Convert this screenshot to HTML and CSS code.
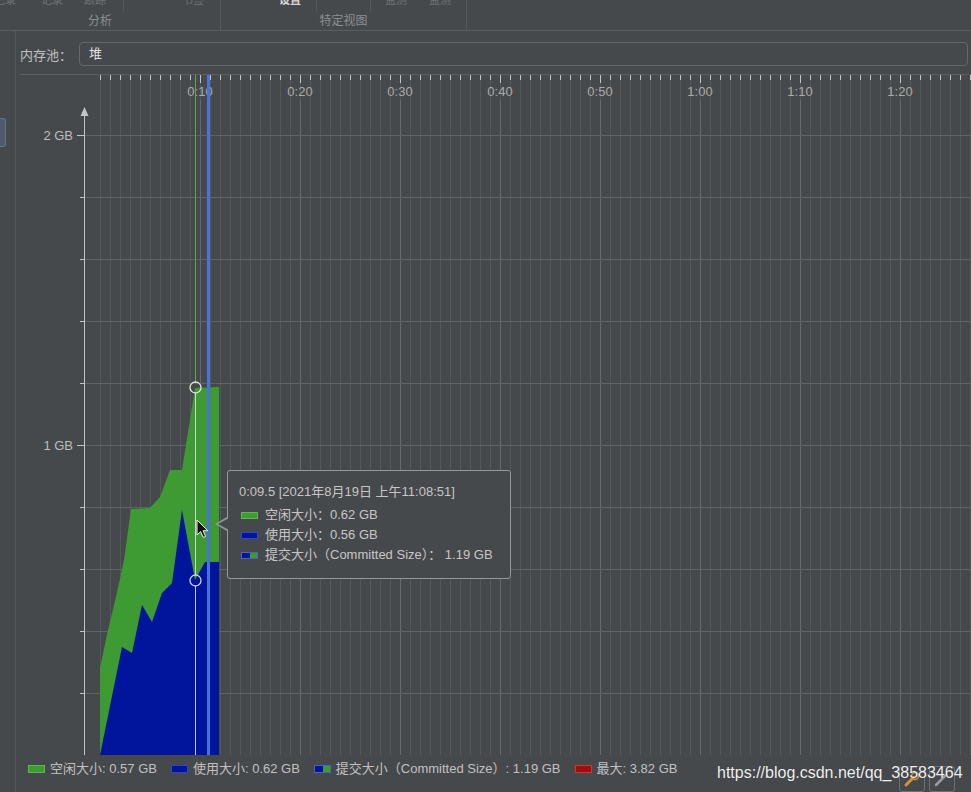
FILE: index.html
```html
<!DOCTYPE html>
<html lang="zh-CN">
<head>
<meta charset="utf-8">
<title>内存</title>
<link rel="stylesheet" href="styles.css">
</head>
<body>
<div class="app">
  <div class="toolbar">
    <div class="tgroup g1">
      <div class="trow">
        <span class="ti w50">记录</span>
        <span class="ti w44">记录</span>
        <span class="ti w42">跟踪</span>
        <span class="sp w7"></span>
        <span class="tsep"></span>
        <span class="sp w42"></span>
        <span class="ti w54">书签</span>
      </div>
      <div class="tlabel">分析</div>
    </div>
    <div class="tgroup g2">
      <div class="trow">
        <span class="sp w43"></span>
        <span class="ti w52 on">设置</span>
        <span class="tsep"></span>
        <span class="sp w53"></span>
        <span class="tsep"></span>
        <span class="sp w3"></span>
        <span class="ti w44">监测</span>
        <span class="ti w44">监测</span>
        <span class="sp w4"></span>
      </div>
      <div class="tlabel">特定视图</div>
    </div>
  </div>

  <div class="main">
    <div class="sidebar"><div class="side-btn"></div></div>
    <div class="content">
      <div class="pool-row">
        <span class="pool-label">内存池：</span>
        <div class="pool-input">堆</div>
      </div>

      <div class="chart-wrap">
        <svg class="chart" viewBox="20 75 951 680" width="951" height="680" xmlns="http://www.w3.org/2000/svg">
          <defs>
            <pattern id="vminor" x="100" y="0" width="10" height="10" patternUnits="userSpaceOnUse"><rect width="1" height="10" fill="#55585b"/></pattern>
            <pattern id="vmajor" x="100" y="0" width="100" height="10" patternUnits="userSpaceOnUse"><rect width="1" height="10" fill="#67696c"/></pattern>
            <pattern id="tminor" x="100" y="0" width="10" height="10" patternUnits="userSpaceOnUse"><rect width="1" height="10" fill="#c4c4c4"/></pattern>
            <pattern id="tmajor" x="100" y="0" width="100" height="10" patternUnits="userSpaceOnUse"><rect width="1" height="10" fill="#c4c4c4"/></pattern>
            <pattern id="hgrid" x="0" y="135" width="10" height="62" patternUnits="userSpaceOnUse"><rect width="10" height="1" fill="#606366"/></pattern>
            <pattern id="yticks" x="0" y="135" width="10" height="62" patternUnits="userSpaceOnUse"><rect width="10" height="1" fill="#c4c4c4"/></pattern>
          </defs>

          <rect x="100" y="80" width="871" height="675" fill="url(#vminor)"/>
          <rect x="200" y="100" width="771" height="655" fill="url(#vmajor)"/>
          <rect x="85" y="135" width="886" height="620" fill="url(#hgrid)"/>
          <rect x="100" y="75" width="871" height="5" fill="url(#tminor)"/>
          <rect x="200" y="75" width="771" height="8" fill="url(#tmajor)"/>

          <text class="axis-t" x="200" y="96" text-anchor="middle">0:10</text>
          <text class="axis-t" x="300" y="96" text-anchor="middle">0:20</text>
          <text class="axis-t" x="400" y="96" text-anchor="middle">0:30</text>
          <text class="axis-t" x="500" y="96" text-anchor="middle">0:40</text>
          <text class="axis-t" x="600" y="96" text-anchor="middle">0:50</text>
          <text class="axis-t" x="700" y="96" text-anchor="middle">1:00</text>
          <text class="axis-t" x="800" y="96" text-anchor="middle">1:10</text>
          <text class="axis-t" x="900" y="96" text-anchor="middle">1:20</text>

          <rect x="84" y="114" width="1" height="641" fill="#c4c4c4"/>
          <polygon points="84.5,107 80.5,116 88.5,116" fill="#c4c4c4"/>
          <rect x="80" y="135" width="4" height="620" fill="url(#yticks)"/>
          <rect x="77" y="135" width="7" height="1" fill="#c4c4c4"/>
          <rect x="77" y="445" width="7" height="1" fill="#c4c4c4"/>
          <text class="y-t" x="73" y="140" text-anchor="end">2 GB</text>
          <text class="y-t" x="73" y="450" text-anchor="end">1 GB</text>

          <polygon fill="#3e9a32" points="100,755 100,668 108,630 116,597 124,560 131,509 150,508 160,497 170,470 182,470 195,388 219,387 219,755"/>
          <polygon fill="#00149c" points="100,755 122,647 132,653 142,605 152,622 162,593 172,583 182,510 195,580 205,562 219,562 219,755"/>

          <rect x="195" y="75" width="1" height="308" fill="#5aa64f"/>
          <rect x="195" y="393" width="1" height="182" fill="#cfd6cf"/>
          <rect x="195" y="586" width="1" height="169" fill="#c3c6d6"/>
          <rect x="207" y="75" width="3" height="680" fill="#4a72dc"/>

          <circle cx="195.5" cy="387.5" r="5.5" fill="none" stroke="#dfe9dc" stroke-width="1.3"/>
          <circle cx="195.5" cy="580.5" r="5.5" fill="none" stroke="#d0d4ec" stroke-width="1.3"/>

          <path transform="translate(197,520)" d="M0 0 L0 15 L3.6 11.6 L6.2 17.4 L8.6 16.4 L6.1 10.7 L10.8 10.7 Z" fill="#111" stroke="#f2f2f2" stroke-width="1"/>
        </svg>

        <div class="tooltip">
          <div class="tt-title">0:09.5 [2021年8月19日 上午11:08:51]</div>
          <div class="tt-row first"><span class="sw sw-green"></span><span>空闲大小：0.62 GB</span></div>
          <div class="tt-row"><span class="sw sw-blue"></span><span>使用大小：0.56 GB</span></div>
          <div class="tt-row"><span class="sw sw-both"></span><span>提交大小（Committed Size）： 1.19 GB</span></div>
        </div>
      </div>

      <div class="legend">
        <div class="lg-item"><span class="lsw sw-green"></span><span>空闲大小: 0.57 GB</span></div>
        <div class="lg-item"><span class="lsw sw-blue"></span><span>使用大小: 0.62 GB</span></div>
        <div class="lg-item"><span class="lsw sw-both"></span><span>提交大小（Committed Size）: 1.19 GB</span></div>
        <div class="lg-item"><span class="lsw sw-red"></span><span>最大: 3.82 GB</span></div>
      </div>
    </div>
  </div>

  <div class="corner-btns">
    <span class="cbtn"><svg width="24" height="24" viewBox="0 0 24 24"><path d="M6 18 L13 11" stroke="#d6922e" stroke-width="3" stroke-linecap="round"/><circle cx="15" cy="9" r="3.5" fill="none" stroke="#d6922e" stroke-width="1.5"/></svg></span>
    <span class="cbtn"><svg width="24" height="24" viewBox="0 0 24 24"><path d="M6 18 L16 8" stroke="#9a9da0" stroke-width="2.5" stroke-linecap="round"/></svg></span>
  </div>
  <div class="watermark">https://blog.csdn.net/qq_38583464</div>
</div>
</body>
</html>
```

FILE: styles.css
```css
* { box-sizing: border-box; }

html, body {
  margin: 0;
  height: 100%;
}

body {
  background: #46494c;
  font-family: "Liberation Sans", "Noto Sans CJK SC", sans-serif;
  font-size: 13px;
  color: #bbbbbb;
  overflow: hidden;
}

.app {
  position: relative;
  width: 971px;
  height: 792px;
  display: flex;
  flex-direction: column;
  overflow: hidden;
}

/* toolbar */
.toolbar {
  flex: none;
  height: 31px;
  display: flex;
  border-bottom: 1px solid #5b5e61;
  overflow: hidden;
}

.tgroup {
  flex: none;
  display: flex;
  flex-direction: column;
  border-right: 1px solid #55585b;
}

.g1 { width: 241px; margin-left: -20px; }
.g2 { width: 246px; }

.trow {
  display: flex;
  align-items: flex-start;
  height: 18px;
  margin-top: -6px;
}

.ti {
  flex: none;
  text-align: center;
  font-size: 11px;
  line-height: 12px;
  color: #6f7275;
}

.ti.on { color: #d8d8d8; font-weight: bold; }

.sp { flex: none; height: 1px; }
.tsep { flex: none; width: 1px; height: 18px; background: #55585b; }

.w3 { width: 3px; }
.w4 { width: 4px; }
.w7 { width: 7px; }
.w42 { width: 42px; }
.w43 { width: 43px; }
.w44 { width: 44px; }
.w50 { width: 50px; }
.w52 { width: 52px; }
.w53 { width: 53px; }
.w54 { width: 54px; }

.tlabel {
  margin-top: 3px;
  text-align: center;
  font-size: 12px;
  line-height: 13px;
  color: #8b8e91;
}

/* main */
.main {
  flex: 1;
  display: flex;
  min-height: 0;
}

.sidebar {
  flex: none;
  width: 16px;
  border-right: 1px solid #55585b;
  padding-top: 87px;
}

.side-btn {
  width: 6px;
  height: 29px;
  background: #4f5a66;
  border: 1px solid #60748a;
  border-left: none;
  border-radius: 0 3px 3px 0;
}

.content {
  flex: 1;
  min-width: 0;
  display: flex;
  flex-direction: column;
}

.pool-row {
  flex: none;
  height: 44px;
  margin-left: 4px;
  padding-top: 3px;
  display: flex;
  align-items: center;
  border-bottom: 1px solid #5d6063;
}

.pool-label {
  flex: none;
  width: 59px;
  color: #c0c0c0;
}

.pool-input {
  flex: 1;
  height: 24px;
  margin-right: 3px;
  border: 1px solid #65686b;
  border-radius: 4px;
  padding-left: 9px;
  line-height: 22px;
  color: #e0e0e0;
}

/* chart */
.chart-wrap {
  position: relative;
  flex: none;
  height: 680px;
  margin-left: 4px;
}

.chart {
  display: block;
  width: 951px;
  height: 680px;
}

.axis-t {
  fill: #a9a9a9;
  font-size: 13px;
}

.y-t {
  fill: #bdbdbd;
  font-size: 13px;
}

/* tooltip */
.tooltip {
  position: absolute;
  left: 207px;
  top: 395px;
  width: 284px;
  height: 109px;
  background: #46494c;
  border: 1px solid #95989b;
  border-radius: 3px;
  padding: 11px 0 0 11px;
  line-height: 20px;
  color: #c6c6c6;
}

.tooltip::before {
  content: "";
  position: absolute;
  left: -13px;
  top: 46px;
  border-style: solid;
  border-width: 7px 12px 7px 0;
  border-color: transparent #95989b transparent transparent;
}

.tooltip::after {
  content: "";
  position: absolute;
  left: -10px;
  top: 47px;
  border-style: solid;
  border-width: 6px 11px 6px 0;
  border-color: transparent #46494c transparent transparent;
}

.tt-row {
  display: flex;
  align-items: center;
  gap: 7px;
  margin-left: 2px;
}

.tt-row.first { margin-top: 3px; }

.sw {
  flex: none;
  width: 17px;
  height: 7px;
}

.sw-green { background: #3e9a32; border: 1px solid #5fb552; }
.sw-blue { background: #00149c; border: 1px solid #3246c8; }
.sw-red { background: #a50d0d; border: 1px solid #c43a3a; }
.sw-both {
  background: linear-gradient(to right, #00149c 0 50%, #3e9a32 50% 100%);
  border: 1px solid #4a66b8;
}

/* legend */
.legend {
  flex: 1;
  display: flex;
  align-items: flex-start;
  gap: 14px;
  padding: 6px 0 0 12px;
  line-height: 16px;
  color: #c0c0c0;
}

.lg-item {
  display: flex;
  align-items: center;
  gap: 5px;
}

.lsw {
  flex: none;
  width: 17px;
  height: 8px;
}

/* overlays */
.corner-btns {
  position: absolute;
  left: 899px;
  top: 766px;
  display: flex;
  gap: 4px;
}

.cbtn {
  width: 26px;
  height: 26px;
  border: 1px solid #6d7073;
  border-radius: 3px;
  display: flex;
  align-items: center;
  justify-content: center;
}

.watermark {
  position: absolute;
  left: 717px;
  top: 764px;
  font-size: 16px;
  line-height: 18px;
  color: #f0f0f0;
  text-shadow: 0 0 1px rgba(0, 0, 0, 0.4);
}
```
